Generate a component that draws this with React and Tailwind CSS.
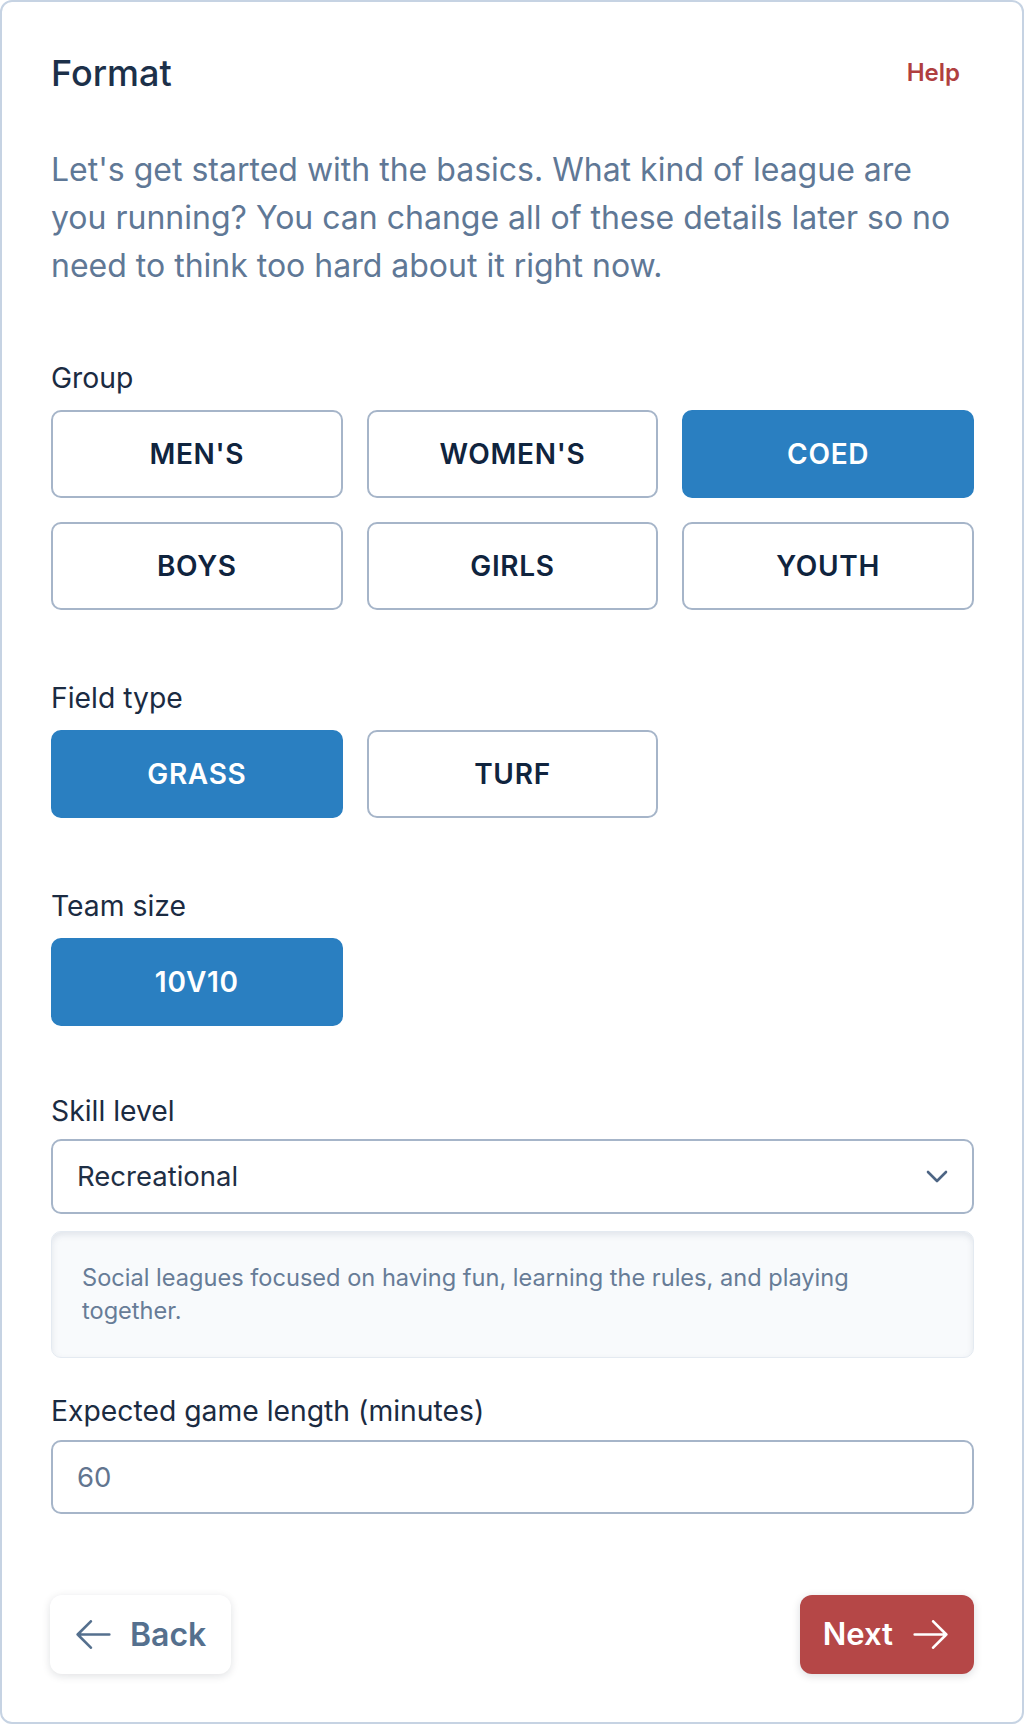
import React, { useState } from 'react';

const groups = ["MEN'S", "WOMEN'S", 'COED', 'BOYS', 'GIRLS', 'YOUTH'];
const fields = ['GRASS', 'TURF'];
const sizes = ['10V10'];

const ArrowLeft = () => (
    <svg width="35" height="29" viewBox="2.25 3.75 19.5 16.5" fill="none" stroke="currentColor" strokeWidth="1.5" strokeLinecap="round" strokeLinejoin="round">
        <path d="M10.5 19.5 3 12m0 0 7.5-7.5M3 12h18" />
    </svg>
);

const ArrowRight = () => (
    <svg width="35" height="29" viewBox="2.25 3.75 19.5 16.5" fill="none" stroke="currentColor" strokeWidth="1.5" strokeLinecap="round" strokeLinejoin="round">
        <path d="M13.5 4.5 21 12m0 0-7.5 7.5M21 12H3" />
    </svg>
);

// Toggle tile used by every option group
const Choice = ({ label, active, onClick }) => (
    <button
        onClick={onClick}
        className={`h-[88px] rounded-[10px] border-2 text-[28px] font-semibold tracking-wide ${
            active ? 'bg-[#2a7fc1] border-[#2a7fc1] text-white' : 'bg-white border-[#a6b5c9] text-[#10243e]'
        }`}
    >
        {label}
    </button>
);

const Label = ({ children, className = '' }) => (
    <div className={`text-[28.3px] leading-[32px] text-[#1b2b42] ${className}`}>{children}</div>
);

const App = () => {
    const [group, setGroup] = useState('COED');
    const [field, setField] = useState('GRASS');
    const [size, setSize] = useState('10V10');
    const [minutes, setMinutes] = useState('60');

    return (
        <div className="h-[1724px] bg-white font-['Inter',sans-serif]">
            <div className="h-full rounded-xl border-2 border-[#c6d3e3] bg-white pl-[49px] pr-[48px] pt-[50px]">
                {/* Header */}
                <div className="flex items-center justify-between">
                    <h1 className="text-[36px] leading-[42px] font-medium text-[#1c3049]">Format</h1>
                    <button className="mr-[14px] text-[24px] font-semibold text-[#b03f3f]">Help</button>
                </div>

                <p className="mt-[52px] max-w-[905px] text-[32px] leading-[48px] text-[#5f7896]">
                    Let's get started with the basics. What kind of league are you running? You can change all of these details later so no need to think too hard about it right now.
                </p>

                {/* Group */}
                <Label className="mt-[72px] mb-4">Group</Label>
                <div className="grid grid-cols-3 gap-6">
                    {groups.map((g) => (
                        <Choice key={g} label={g} active={group === g} onClick={() => setGroup(g)} />
                    ))}
                </div>

                {/* Field type */}
                <Label className="mt-[72px] mb-4">Field type</Label>
                <div className="grid grid-cols-3 gap-6">
                    {fields.map((f) => (
                        <Choice key={f} label={f} active={field === f} onClick={() => setField(f)} />
                    ))}
                </div>

                {/* Team size */}
                <Label className="mt-[72px] mb-4">Team size</Label>
                <div className="grid grid-cols-3 gap-6">
                    {sizes.map((s) => (
                        <Choice key={s} label={s} active={size === s} onClick={() => setSize(s)} />
                    ))}
                </div>

                {/* Skill level */}
                <Label className="mt-[69px] mb-3">Skill level</Label>
                <div className="flex h-[75px] items-center justify-between rounded-[10px] border-2 border-[#a6b5c9] bg-white px-6">
                    <span className="text-[27.5px] text-[#1f2f45]">Recreational</span>
                    <svg width="22" height="14" viewBox="0 0 22 14" fill="none" stroke="#4d6584" strokeWidth="2.6" strokeLinecap="round" strokeLinejoin="round">
                        <path d="M2 2l9 9 9-9" />
                    </svg>
                </div>
                <div className="mt-[17px] h-[127px] rounded-[10px] border border-[#e4eaf1] bg-[#f8fafc] px-[30px] py-[29px] shadow-[inset_0_3px_6px_rgba(100,116,139,0.15)]">
                    <p className="max-w-[800px] text-[23.6px] leading-[33px] text-[#677c97]">
                        Social leagues focused on having fun, learning the rules, and playing together.
                    </p>
                </div>

                {/* Game length */}
                <Label className="mt-[37px] mb-[13px]">Expected game length (minutes)</Label>
                <input
                    value={minutes}
                    onChange={(e) => setMinutes(e.target.value)}
                    className="h-[74px] w-full rounded-[10px] border-2 border-[#a6b5c9] bg-white px-6 text-[27.5px] text-[#62758f] outline-none"
                />

                {/* Footer */}
                <div className="mt-[81px] flex items-center justify-between">
                    <button className="-ml-px flex h-[79px] items-center gap-[19px] rounded-xl bg-white pl-[26px] pr-[25px] text-[32px] font-semibold text-[#55708e] shadow-[0_2px_8px_rgba(15,23,42,0.13)]">
                        <ArrowLeft />
                        <span>Back</span>
                    </button>
                    <button className="flex h-[79px] items-center gap-[20px] rounded-xl bg-[#b54747] pl-[23px] pr-[26px] text-[31px] font-semibold text-white shadow-[0_2px_8px_rgba(15,23,42,0.15)]">
                        <span>Next</span>
                        <ArrowRight />
                    </button>
                </div>
            </div>
        </div>
    );
};

export default App;
